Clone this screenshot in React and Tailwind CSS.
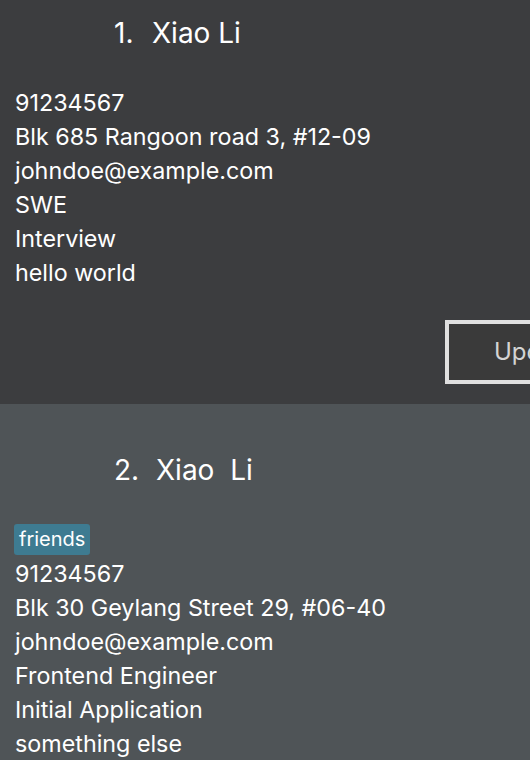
import React from 'react'

const people = [
  {
    index: 1,
    name: 'Xiao Li',
    tags: [],
    phone: '91234567',
    address: 'Blk 685 Rangoon road 3, #12-09',
    email: 'johndoe@example.com',
    role: 'SWE',
    stage: 'Interview',
    note: 'hello world',
    button: true,
  },
  {
    index: 2,
    name: 'Xiao  Li',
    tags: ['friends'],
    phone: '91234567',
    address: 'Blk 30 Geylang Street 29, #06-40',
    email: 'johndoe@example.com',
    role: 'Frontend Engineer',
    stage: 'Initial Application',
    note: 'something else',
    button: false,
  },
]

function PersonCard({ p, odd }) {
  return (
    <div className={`${odd ? 'bg-[#3c3d3f]' : 'bg-[#4f5457] pt-[33px] pb-[40px]'} w-[530px] overflow-hidden`}>
      {/* Header */}
      <div className="flex items-center h-[66px] pl-[114px] text-[28px] text-white whitespace-pre">
        <span className={odd ? 'w-[38px]' : 'w-[42px]'}>{p.index}.</span>
        <span>{p.name}</span>
      </div>

      <div className="pl-[15px] pt-[20px] text-[23.3px] leading-[34px] text-white">
        {p.tags.length > 0 && (
          <div className="flex gap-2 -ml-[1px] pt-[1px] pb-[2px]">
            {p.tags.map((t) => (
              <span key={t} className="bg-[#3e7b91] rounded-[3px] px-[5px] h-[31px] text-[20px] leading-[31px]">
                {t}
              </span>
            ))}
          </div>
        )}
        <p>{p.phone}</p>
        <p>{p.address}</p>
        <p>{p.email}</p>
        <p>{p.role}</p>
        <p>{p.stage}</p>
        <p>{p.note}</p>
      </div>

      {p.button && (
        <div className="flex pt-[30px] pb-[20px]">
          <button className="ml-[445px] w-[160px] h-[64px] shrink-0 border-[4px] border-[#e0e0e0] bg-[#3a3a3a] text-[#d4d4d4] text-[24px] text-left pl-[45px]">
            Update
          </button>
        </div>
      )}
    </div>
  )
}

export default function App() {
  return (
    <div className="w-[530px] h-[760px] overflow-hidden bg-[#4f5457] font-['Inter','Open_Sans',sans-serif]">
      {people.map((p) => (
        <PersonCard key={p.index} p={p} odd={p.index % 2 === 1} />
      ))}
    </div>
  )
}
